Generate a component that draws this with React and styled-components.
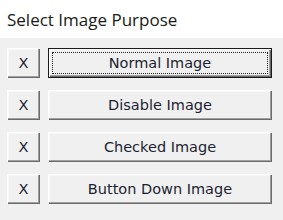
import React from 'react';
import styled, { createGlobalStyle } from 'styled-components';

const GlobalStyle = createGlobalStyle`
  html, body {
    margin: 0;
    padding: 0;
    background: #ffffff;
  }
  #root {
    width: 283px;
    height: 220px;
  }
`;

const Dialog = styled.div`
  display: flex;
  flex-direction: column;
  width: 283px;
  height: 220px;
  overflow: hidden;
`;

const Title = styled.div`
  height: 38px;
  flex-shrink: 0;
  padding-left: 7px;
  display: flex;
  align-items: center;
  font-family: "Open Sans", "Noto Sans", sans-serif;
  font-size: 17px;
  color: #1a1a1a;
  background: #ffffff;
`;

const Panel = styled.div`
  flex: 1;
  background: #f0f0f0;
  padding: 10px 11px 0 7px;
  display: flex;
  flex-direction: column;
  gap: 12px;
`;

const Row = styled.div`
  display: flex;
  gap: 8px;
  height: 30px;
`;

const Button = styled.button`
  position: relative;
  height: 30px;
  width: ${p => (p.small ? '33px' : 'auto')};
  flex: ${p => (p.small ? '0 0 33px' : '1')};
  padding: 0;
  margin: 0;
  background: #f0f0f0;
  border: none;
  border-radius: 0;
  font-family: Tahoma, "DejaVu Sans", "Liberation Sans", sans-serif;
  font-size: 14.5px;
  color: #1e1e32;
  cursor: pointer;
  box-shadow: ${p =>
    p.focused
      ? 'inset 0 0 0 1px #1a1a1a, inset 2px 2px #ffffff, inset -2px -2px #6a6a6a, inset -3px -3px #a0a0a0'
      : 'inset 1px 1px #ffffff, inset -1px -1px #6a6a6a, inset -2px -2px #a0a0a0, inset 2px 2px #f8f8f8'};

  &:focus {
    outline: none;
  }
`;

const FocusRing = styled.span`
  position: absolute;
  inset: 4px;
  border: 1px dotted #222;
  pointer-events: none;
`;

const items = ['Normal Image', 'Disable Image', 'Checked Image', 'Button Down Image'];

const App = () => (
  <>
    <GlobalStyle />
    <Dialog>
      <Title>Select Image Purpose</Title>
      <Panel>
        {items.map((label, i) => (
          <Row key={label}>
            <Button small>X</Button>
            <Button focused={i === 0}>
              {i === 0 && <FocusRing />}
              {label}
            </Button>
          </Row>
        ))}
      </Panel>
    </Dialog>
  </>
);

export default App;
